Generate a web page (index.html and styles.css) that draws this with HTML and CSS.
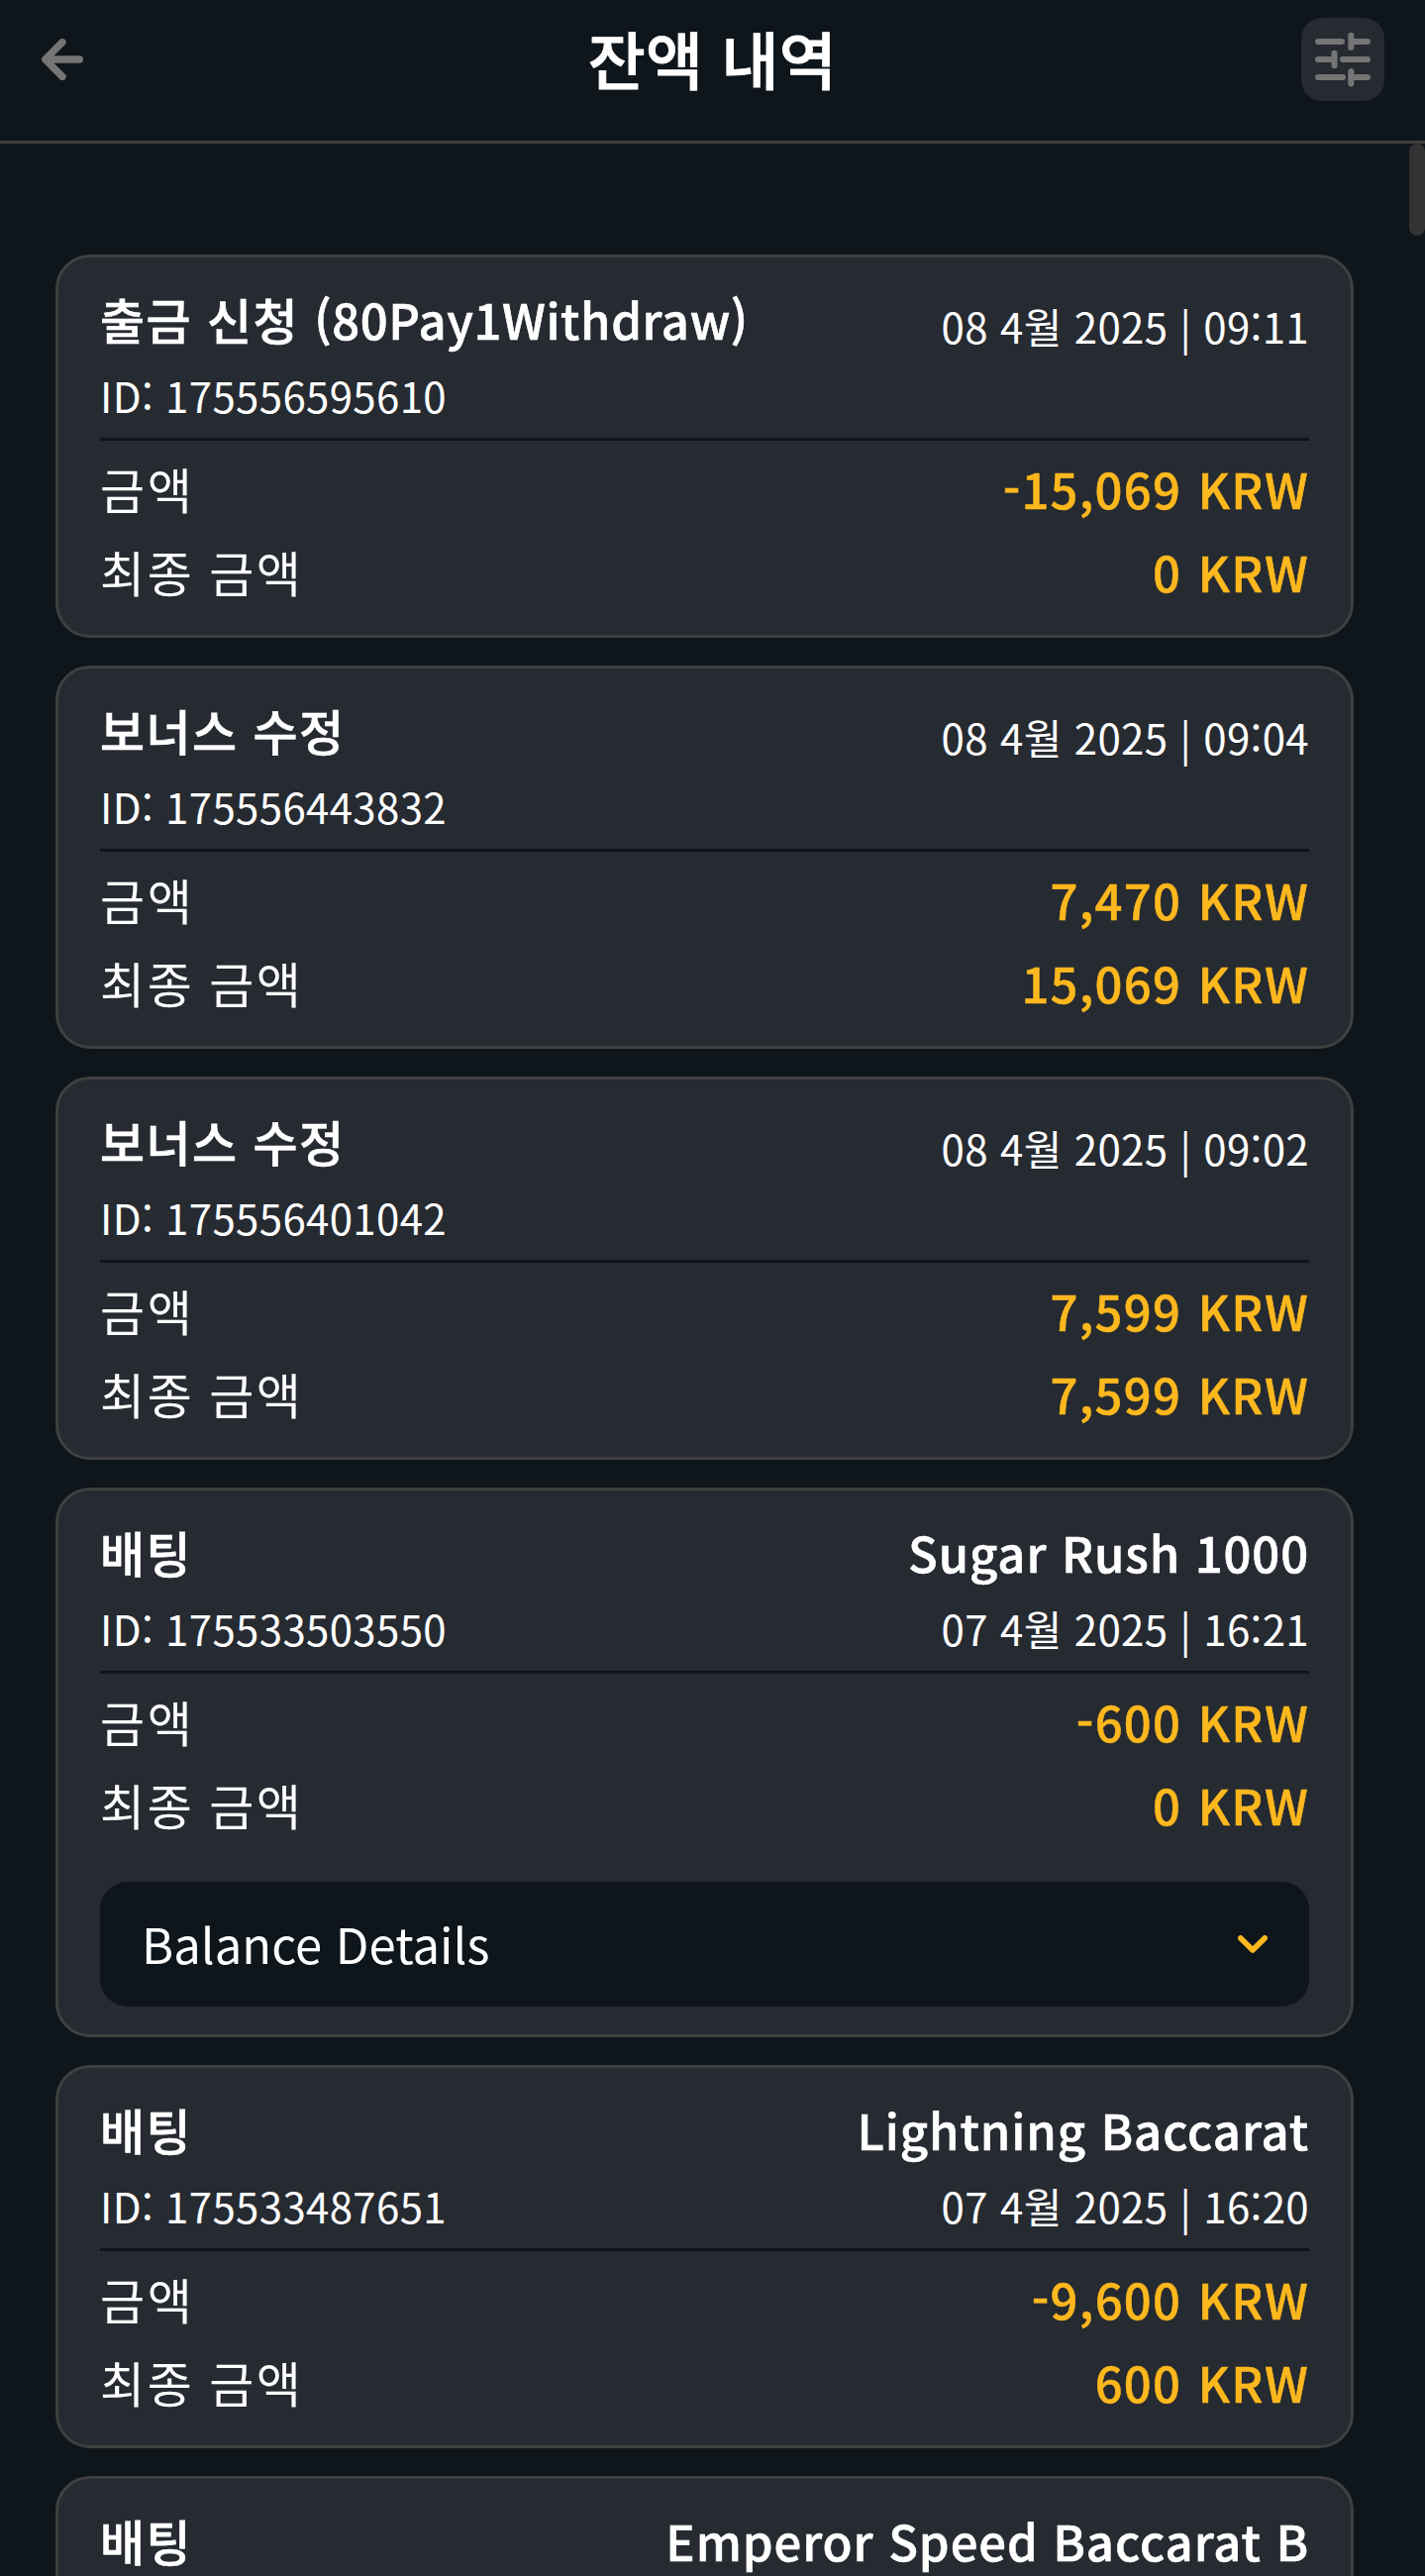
FILE: index.html
```html
<!DOCTYPE html>
<html lang="ko">
<head>
    <meta charset="UTF-8">
    <meta name="viewport" content="width=device-width, initial-scale=1.0">
    <title>잔액 내역</title>
    <link rel="stylesheet" href="styles.css">
</head>
<body>
    <!-- Header -->
    <header class="header">
        <button class="back-btn" aria-label="Back">
            <svg width="42" height="42" viewBox="0 0 42 42" fill="none" stroke="currentColor" stroke-width="7.4" stroke-linecap="round" stroke-linejoin="round">
                <path d="M38.3 21H5M21 3.7L3.7 21L21 38.3"/>
            </svg>
        </button>
        <h1 class="title">잔액 내역</h1>
        <button class="filter-btn" aria-label="Filter">
            <svg width="56" height="56" viewBox="0 0 56 56" fill="none" stroke="currentColor" stroke-width="6" stroke-linecap="round">
                <path d="M3 10H27M36.3 3.7V16M38 10H53"/>
                <path d="M3 28H17M19.5 21.7V34.3M28 28H53"/>
                <path d="M3 46H28M36.3 39.9V52.4M38 46H53"/>
            </svg>
        </button>
    </header>

    <div class="content">
        <main class="list">
            <!-- Withdrawal -->
            <section class="card">
                <div class="card-head">
                    <div>
                        <div class="name">출금 신청 <span class="method">(80Pay1Withdraw)</span></div>
                        <div class="info">ID: 175556595610</div>
                    </div>
                    <div class="right">
                        <div class="info date-only">08 4월 2025 | 09:11</div>
                    </div>
                </div>
                <div class="row"><span class="label">금액</span><span class="amount">-15,069 KRW</span></div>
                <div class="row"><span class="label">최종 금액</span><span class="amount">0 KRW</span></div>
            </section>

            <!-- Bonus -->
            <section class="card">
                <div class="card-head">
                    <div>
                        <div class="name">보너스 수정</div>
                        <div class="info">ID: 175556443832</div>
                    </div>
                    <div class="right">
                        <div class="info date-only">08 4월 2025 | 09:04</div>
                    </div>
                </div>
                <div class="row"><span class="label">금액</span><span class="amount">7,470 KRW</span></div>
                <div class="row"><span class="label">최종 금액</span><span class="amount">15,069 KRW</span></div>
            </section>

            <section class="card">
                <div class="card-head">
                    <div>
                        <div class="name">보너스 수정</div>
                        <div class="info">ID: 175556401042</div>
                    </div>
                    <div class="right">
                        <div class="info date-only">08 4월 2025 | 09:02</div>
                    </div>
                </div>
                <div class="row"><span class="label">금액</span><span class="amount">7,599 KRW</span></div>
                <div class="row"><span class="label">최종 금액</span><span class="amount">7,599 KRW</span></div>
            </section>

            <!-- Bets -->
            <section class="card">
                <div class="card-head">
                    <div>
                        <div class="name">배팅</div>
                        <div class="info">ID: 175533503550</div>
                    </div>
                    <div class="right">
                        <div class="name">Sugar Rush 1000</div>
                        <div class="info">07 4월 2025 | 16:21</div>
                    </div>
                </div>
                <div class="row"><span class="label">금액</span><span class="amount">-600 KRW</span></div>
                <div class="row"><span class="label">최종 금액</span><span class="amount">0 KRW</span></div>
                <button class="details">
                    <span>Balance Details</span>
                    <svg width="30" height="19" viewBox="0 0 30 19" fill="none" stroke="currentColor" stroke-width="5.6" stroke-linecap="round" stroke-linejoin="round">
                        <path d="M2.8 2.9L15 15L27.2 2.9"/>
                    </svg>
                </button>
            </section>

            <section class="card">
                <div class="card-head">
                    <div>
                        <div class="name">배팅</div>
                        <div class="info">ID: 175533487651</div>
                    </div>
                    <div class="right">
                        <div class="name">Lightning Baccarat</div>
                        <div class="info">07 4월 2025 | 16:20</div>
                    </div>
                </div>
                <div class="row"><span class="label">금액</span><span class="amount">-9,600 KRW</span></div>
                <div class="row"><span class="label">최종 금액</span><span class="amount">600 KRW</span></div>
            </section>

            <section class="card">
                <div class="card-head">
                    <div>
                        <div class="name">배팅</div>
                    </div>
                    <div class="right">
                        <div class="name">Emperor Speed Baccarat B</div>
                    </div>
                </div>
            </section>
        </main>
        <div class="scrollbar"><div class="thumb"></div></div>
    </div>
</body>
</html>
```
FILE: styles.css
```css
* {
    box-sizing: border-box;
}

body {
    margin: 0;
    height: 2601px;
    overflow: hidden;
    display: flex;
    flex-direction: column;
    background-color: #0e151b;
    color: #fff;
    font-family: "Noto Sans CJK KR", sans-serif;
}

button {
    border: none;
    padding: 0;
    background: none;
    color: inherit;
    font: inherit;
    cursor: pointer;
}

/* Header */
.header {
    flex: none;
    display: flex;
    justify-content: space-between;
    height: 145px;
    padding: 18px 41px 0;
    border-bottom: 3px solid #404040;
}

.back-btn {
    display: flex;
    align-items: center;
    width: 84px;
    height: 84px;
    padding-left: 1px;
    color: #757575;
}

.title {
    margin: 0;
    font-size: 63px;
    font-weight: 500;
    line-height: 80px;
    letter-spacing: 0.4px;
    -webkit-text-stroke: 0.9px #fff;
}

.filter-btn {
    display: flex;
    align-items: center;
    justify-content: center;
    width: 84px;
    height: 84px;
    border-radius: 21px;
    background-color: #262a31;
    color: #757575;
}

/* List */
.content {
    flex: 1;
    min-height: 0;
    display: flex;
    overflow: hidden;
}

.list {
    flex: 1;
    display: flex;
    flex-direction: column;
    gap: 28px;
    padding: 112px 56px 0;
}

.scrollbar {
    width: 16px;
}

.thumb {
    height: 93px;
    border-radius: 8px;
    background-color: #333;
}

/* Card */
.card {
    flex: none;
    padding: 25px 42px 22px;
    border: 3px solid #404040;
    border-radius: 35px;
    background-color: #262a31;
}

.card-head {
    display: flex;
    justify-content: space-between;
    margin-bottom: 6px;
    padding-bottom: 12px;
    border-bottom: 3px solid #0f141c;
}

.card:last-child .card-head {
    min-height: 160px;
}

.right {
    text-align: right;
}

.name {
    margin-bottom: 9px;
    font-size: 49px;
    font-weight: 500;
    line-height: 73px;
    letter-spacing: 1.4px;
    -webkit-text-stroke: 0.6px #fff;
}

.right .name {
    letter-spacing: 0.9px;
}

.method {
    letter-spacing: 0.6px;
}

.info {
    font-size: 42px;
    line-height: 63px;
    letter-spacing: 0.35px;
}

.date-only {
    margin-top: 12px;
}

.row {
    display: flex;
    justify-content: space-between;
    font-size: 49px;
    line-height: 84px;
}

.label {
    letter-spacing: 2.6px;
    word-spacing: -1.5px;
}

.amount {
    color: #fdb81e;
    font-weight: 500;
    letter-spacing: 1.225px;
    word-spacing: 1.5px;
    -webkit-text-stroke: 0.5px #fdb81e;
}

/* Balance details toggle */
.details {
    display: flex;
    align-items: center;
    justify-content: space-between;
    width: 100%;
    height: 126px;
    margin: 36px 0 6px;
    padding: 0 42px;
    border-radius: 28px;
    background-color: #0e151b;
    font-size: 49px;
}

.details span {
    padding-bottom: 4px;
}

.details svg {
    color: #fdb81e;
}
```
